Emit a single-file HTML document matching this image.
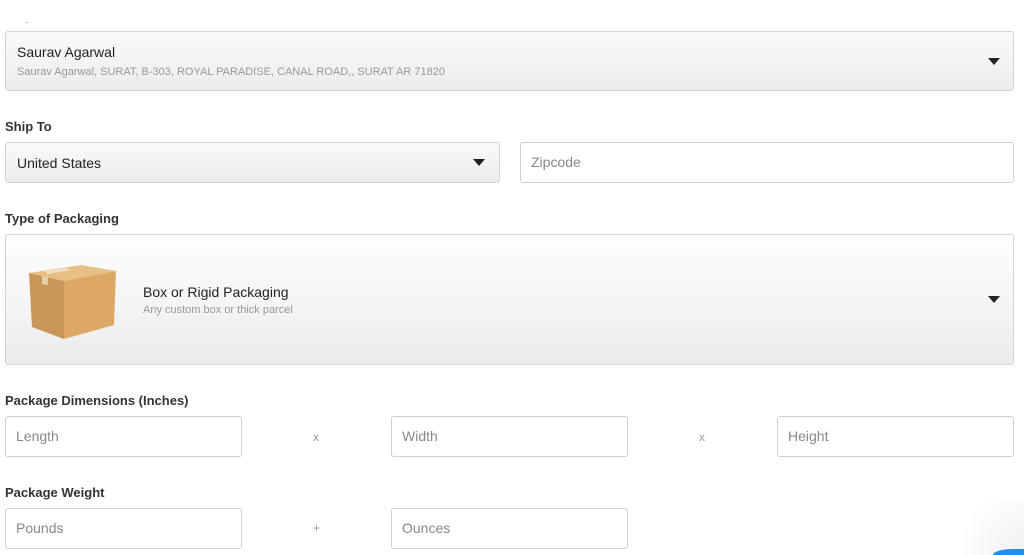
<!DOCTYPE html>
<html style="width:1024px;height:555px;overflow:hidden"><head><style>
html,body{overflow:hidden}
body{margin:0;width:1024px;height:555px;background:#fff;font-family:"Liberation Sans",sans-serif;position:relative;overflow:hidden;color:#222}
.a{position:absolute;box-sizing:border-box}
.sel{border:1px solid #d4d4d4;border-radius:3px;background:linear-gradient(#fafafa,#ececec)}
.inp{border:1px solid #cfcfcf;border-radius:3px;background:#fff;color:#888;font-size:14px;padding-left:10px;line-height:38px}
.lbl{font-size:13px;font-weight:bold;color:#333;left:5px}
.tri{width:0;height:0;border-left:6px solid transparent;border-right:6px solid transparent;border-top:7px solid #222}
.x{color:#999;font-size:12px}
</style></head><body>
<div class="a" style="left:26px;top:16px;font-size:8px">.</div>
<div class="a sel" style="left:5px;top:31px;width:1009px;height:60px">
 <div class="a" style="left:11px;top:12px;font-size:14px;color:#222">Saurav Agarwal</div>
 <div class="a" style="left:11px;top:34px;font-size:11px;color:#999">Saurav Agarwal, SURAT, B-303, ROYAL PARADISE, CANAL ROAD,, SURAT AR 71820</div>
 <div class="a tri" style="left:982px;top:26px"></div>
</div>
<div class="a lbl" style="top:119px">Ship To</div>
<div class="a sel" style="left:5px;top:142px;width:495px;height:41px">
 <div class="a" style="left:11px;top:12px;font-size:14px">United States</div>
 <div class="a tri" style="left:467px;top:16px"></div>
</div>
<div class="a inp" style="left:520px;top:142px;width:494px;height:41px">Zipcode</div>
<div class="a lbl" style="top:211px">Type of Packaging</div>
<div class="a sel" style="left:5px;top:234px;width:1009px;height:131px;background:linear-gradient(#fefefe,#ececec)">
 <svg class="a" style="left:20px;top:26px" width="92" height="80" viewBox="0 0 92 80">
  <polygon points="3,12 55,4 90,10 38,20" fill="#e8bf84"/>
  <polygon points="3,12 38,20 38,78 6,66" fill="#c99659"/>
  <polygon points="38,20 90,10 88,64 38,78" fill="#dca866"/>
  <polygon points="18,10 40,7 44,9 22,13" fill="#efe0c0"/>
  <polygon points="16,15 22,16 22,24 16,23" fill="#e4cfa8"/>
 </svg>
 <div class="a" style="left:137px;top:49px;font-size:14px">Box or Rigid Packaging</div>
 <div class="a" style="left:137px;top:69px;font-size:11px;color:#999">Any custom box or thick parcel</div>
 <div class="a tri" style="left:982px;top:61px"></div>
</div>
<div class="a lbl" style="top:393px">Package Dimensions (Inches)</div>
<div class="a inp" style="left:5px;top:416px;width:237px;height:41px">Length</div>
<div class="a x" style="left:313px;top:430px">x</div>
<div class="a inp" style="left:391px;top:416px;width:237px;height:41px">Width</div>
<div class="a x" style="left:699px;top:430px">x</div>
<div class="a inp" style="left:777px;top:416px;width:237px;height:41px">Height</div>
<div class="a lbl" style="top:485px">Package Weight</div>
<div class="a inp" style="left:5px;top:508px;width:237px;height:41px">Pounds</div>
<div class="a x" style="left:313px;top:521px">+</div>
<div class="a inp" style="left:391px;top:508px;width:237px;height:41px">Ounces</div>
<div class="a" style="left:944px;top:500px;width:80px;height:55px;background:radial-gradient(circle at 100% 100%,rgba(0,0,0,0.06),rgba(0,0,0,0) 70%)"></div>
<div class="a" style="left:993px;top:549px;width:31px;height:6px;background:#1e90f0;border-top-left-radius:20px 6px"></div>
</body></html>
